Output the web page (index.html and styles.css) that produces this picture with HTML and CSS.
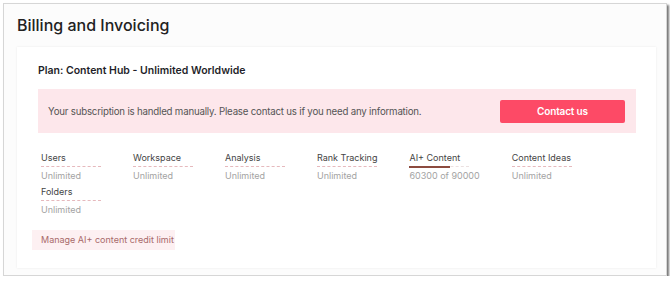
FILE: index.html
```html
<!DOCTYPE html>
<html lang="en">
<head>
	<meta charset="UTF-8">
	<title>Billing and Invoicing</title>
	<link rel="stylesheet" href="styles.css">
</head>
<body>
	<div class="window">
		<h1 class="page__title">Billing and Invoicing</h1>
		<div class="card">
			<h2 class="card__title">Plan: Content Hub - Unlimited Worldwide</h2>
			<div class="notice">
				<span class="notice__text">Your subscription is handled manually. Please contact us if you need any information.</span>
				<a class="notice__btn">Contact us</a>
			</div>
			<div class="limits">
				<div class="limit">
					<div class="limit__name">Users</div>
					<div class="limit__line"></div>
					<div class="limit__value">Unlimited</div>
				</div>
				<div class="limit">
					<div class="limit__name">Workspace</div>
					<div class="limit__line"></div>
					<div class="limit__value">Unlimited</div>
				</div>
				<div class="limit">
					<div class="limit__name">Analysis</div>
					<div class="limit__line"></div>
					<div class="limit__value">Unlimited</div>
				</div>
				<div class="limit">
					<div class="limit__name">Rank Tracking</div>
					<div class="limit__line"></div>
					<div class="limit__value">Unlimited</div>
				</div>
				<div class="limit">
					<div class="limit__name">AI+ Content</div>
					<div class="limit__line limit__line--progress"><span class="limit__fill" style="width: 67%"></span></div>
					<div class="limit__value">60300 of 90000</div>
				</div>
				<div class="limit">
					<div class="limit__name">Content Ideas</div>
					<div class="limit__line"></div>
					<div class="limit__value">Unlimited</div>
				</div>
				<div class="limit">
					<div class="limit__name">Folders</div>
					<div class="limit__line"></div>
					<div class="limit__value">Unlimited</div>
				</div>
			</div>
			<a class="manage">Manage AI+ content credit limit</a>
		</div>
	</div>
</body>
</html>
```

FILE: styles.css
```css
*{
	box-sizing: border-box;
}
body{
	margin: 0;
	background: #fff;
	font-family: Inter, "Noto Sans", sans-serif;
}
.window{
	margin: 3px 0 0 3px;
	width: 664px;
	height: 273px;
	background: #fcfcfc;
	border: 1px solid #d6d6d6;
	box-shadow: 2px 2px 2px #777;
	padding: 0 10px 0 13px;
}
.page__title{
	margin: 0;
	height: 43px;
	padding-top: 10px;
	font-size: 16px;
	font-weight: 500;
	line-height: 22px;
	color: #222;
}
.card{
	background: #fff;
	height: 221px;
	padding: 17px 20px 0 21px;
	box-shadow: 0 0 2px rgba(0,0,0,0.08);
}
.card__title{
	margin: 0;
	font-size: 10.5px;
	font-weight: 600;
	line-height: 14px;
	color: #1f1f2a;
}
.notice{
	margin-top: 11px;
	height: 44px;
	background: #fde7eb;
	display: flex;
	align-items: center;
	justify-content: space-between;
	padding: 0 11px 0 10px;
}
.notice__text{
	font-size: 9.7px;
	letter-spacing: -0.2px;
	color: #555;
}
.notice__btn{
	width: 125px;
	height: 23px;
	line-height: 23px;
	text-align: center;
	background: #fd4a66;
	border-radius: 2px;
	color: #fff;
	font-size: 10px;
	letter-spacing: -0.15px;
	font-weight: 600;
}
.limits{
	display: flex;
	flex-wrap: wrap;
	margin-top: 18px;
	padding-left: 3px;
}
.limit{
	min-width: 60px;
	margin: 0 32px 2px 0;
}
.limit__name{
	font-size: 9px;
	line-height: 14px;
	color: #444;
}
.limit__line{
	height: 1px;
	margin: 1px 0 2px;
	border-top: 1px dashed #e6b9bd;
}
.limit__line--progress{
	width: 60px;
	border-top: 1px dashed #ebe0e0;
	position: relative;
}
.limit__fill{
	position: absolute;
	left: 0;
	top: -1px;
	height: 2px;
	background: #8c4b3f;
}
.limit__value{
	font-size: 9px;
	line-height: 14px;
	color: #a3a3a3;
}
.manage{
	display: inline-block;
	margin: 11px 0 0 -6px;
	padding: 3px 1px 3px 9px;
	background: #fdf0f2;
	color: #a86a6a;
	font-size: 9px;
	line-height: 14px;
}
```
